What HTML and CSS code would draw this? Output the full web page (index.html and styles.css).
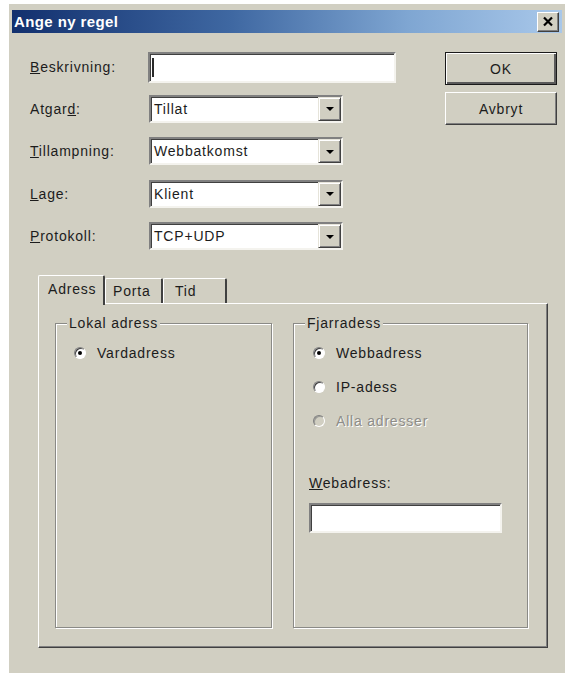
FILE: index.html
```html
<!DOCTYPE html>
<html lang="sv">
<head>
<meta charset="utf-8">
<title>Ange ny regel</title>
<link rel="stylesheet" href="styles.css">
</head>
<body>
<div class="dialog">
  <div class="titlebar">
    <span class="title">Ange ny regel</span>
    <span class="close">
      <svg width="12" height="11" viewBox="0 0 12 11"><path d="M2 1.5 L10 9.5 M10 1.5 L2 9.5" stroke="#000" stroke-width="2.2"/></svg>
    </span>
  </div>

  <div class="top">
    <div class="form">
      <label class="lbl tall"><u>B</u>eskrivning:</label>
      <div class="textbox wide"><span class="caret"></span></div>

      <label class="lbl">Atgar<u>d</u>:</label>
      <div class="combo"><span class="val">Tillat</span><span class="drop"><span class="arrow"></span></span></div>

      <label class="lbl"><u>T</u>illampning:</label>
      <div class="combo"><span class="val">Webbatkomst</span><span class="drop"><span class="arrow"></span></span></div>

      <label class="lbl"><u>L</u>age:</label>
      <div class="combo"><span class="val">Klient</span><span class="drop"><span class="arrow"></span></span></div>

      <label class="lbl"><u>P</u>rotokoll:</label>
      <div class="combo"><span class="val">TCP+UDP</span><span class="drop"><span class="arrow"></span></span></div>
    </div>

    <div class="buttons">
      <div class="btn default"><span>OK</span></div>
      <div class="btn"><span>Avbryt</span></div>
    </div>
  </div>

  <div class="tabs">
    <div class="tabstrip">
      <div class="tab active t-adress">Adress</div>
      <div class="tab t-porta">Porta</div>
      <div class="tab t-tid">Tid</div>
    </div>
    <div class="panel">
      <div class="group local">
        <span class="legend">Lokal adress</span>
        <div class="radio-row"><span class="radio on"></span><span>Vardadress</span></div>
      </div>
      <div class="group remote">
        <span class="legend">Fjarradess</span>
        <div class="radio-row"><span class="radio on"></span><span>Webbadress</span></div>
        <div class="radio-row"><span class="radio"></span><span>IP-adess</span></div>
        <div class="radio-row disabled"><span class="radio"></span><span class="dis-text">Alla adresser</span></div>
        <label class="lbl field-lbl"><u>W</u>ebadress:</label>
        <div class="textbox url"></div>
      </div>
    </div>
  </div>
</div>
</body>
</html>
```

FILE: styles.css
```css
html, body {
  margin: 0;
  padding: 0;
  background: #ffffff;
  overflow: hidden;
}

body {
  font-family: "Liberation Sans", Arial, sans-serif;
  font-size: 14px;
  letter-spacing: 0.8px;
  color: #1c1c1c;
}

.dialog {
  box-sizing: border-box;
  width: 556px;
  height: 669px;
  margin: 4px 0 0 9px;
  padding: 6px 3px 0 3px;
  background: #d1cfc2;
}

/* caption bar */
.titlebar {
  height: 23px;
  display: flex;
  align-items: center;
  justify-content: space-between;
  padding: 0 3px 0 2px;
  background: linear-gradient(to right, #12306e 0%, #3f68a2 40%, #7fa6d2 72%, #a9c8ea 100%);
}

.title {
  color: #fff;
  font-weight: bold;
  font-size: 15px;
  letter-spacing: 0.4px;
}

.close {
  box-sizing: border-box;
  width: 22px;
  height: 20px;
  display: flex;
  align-items: center;
  justify-content: center;
  background: #d1cfc2;
  border: 1px solid;
  border-color: #fff #404040 #404040 #fff;
  box-shadow: inset -1px -1px 0 #808080;
}

/* upper fields */
.top {
  display: flex;
  justify-content: space-between;
  margin: 19px 5px 0 18px;
}

.form {
  display: grid;
  grid-template-columns: 118px auto;
  grid-auto-rows: 42.5px;
  align-items: start;
}

.lbl {
  line-height: 28px;
}

.lbl.tall {
  line-height: 31px;
}

.textbox {
  box-sizing: border-box;
  background: #fff;
  border: 2px solid;
  border-color: #808080 #f4f3ee #f4f3ee #808080;
  box-shadow: inset 1px 1px 0 #404040;
  position: relative;
}

.textbox.wide {
  width: 248px;
  height: 31px;
}

.caret {
  position: absolute;
  left: 2px;
  top: 4px;
  width: 2px;
  height: 19px;
  background: #2a2a2a;
}

.combo {
  box-sizing: border-box;
  width: 194px;
  height: 28px;
  margin-left: 1px;
  background: #fff;
  border: 2px solid;
  border-color: #808080 #f4f3ee #f4f3ee #808080;
  box-shadow: inset 1px 1px 0 #404040;
  display: flex;
  align-items: center;
  justify-content: space-between;
}

.combo .val {
  padding-left: 3px;
}

.drop {
  box-sizing: border-box;
  width: 23px;
  height: 24px;
  align-self: flex-end;
  background: #d1cfc2;
  border: 1px solid;
  border-color: #e6e4da #404040 #404040 #e6e4da;
  box-shadow: inset 1px 1px 0 #fff, inset -1px -1px 0 #808080;
  display: flex;
  align-items: center;
  justify-content: center;
}

.arrow {
  width: 0;
  height: 0;
  border-left: 4px solid transparent;
  border-right: 4px solid transparent;
  border-top: 4px solid #000;
  margin-top: 1px;
}

/* command buttons */
.buttons {
  display: flex;
  flex-direction: column;
  gap: 7px;
}

.btn {
  box-sizing: border-box;
  width: 112px;
  height: 33px;
  display: flex;
  align-items: center;
  justify-content: center;
  background: #d1cfc2;
  border: 1px solid;
  border-color: #fff #404040 #404040 #fff;
  box-shadow: inset -1px -1px 0 #808080;
}

.btn.default {
  border: 1px solid #1a1a1a;
  box-shadow: inset 1px 1px 0 #fff, inset -2px -2px 0 #5a5a5a;
}

/* tab control */
.tabs {
  margin: 10px 0 0 26px;
}

.tabstrip {
  display: flex;
  align-items: flex-end;
  height: 28px;
}

.tab {
  box-sizing: border-box;
  height: 25px;
  padding-left: 8px;
  line-height: 24px;
  background: #d1cfc2;
  border-top: 1px solid #fff;
  border-left: 1px solid #fff;
  border-right: 2px solid #404040;
  border-radius: 2px 2px 0 0;
}

.tab.active {
  height: 30px;
  margin-bottom: -2px;
  position: relative;
  z-index: 1;
  line-height: 27px;
  padding-left: 9px;
}

.t-adress { width: 67px; }
.t-porta { width: 58px; padding-left: 7px; }
.t-tid { width: 64px; padding-left: 11px; }

.panel {
  box-sizing: border-box;
  width: 510px;
  height: 345px;
  display: flex;
  gap: 21px;
  padding: 19px 18px 20px 16px;
  border-top: 1px solid #fff;
  border-left: 1px solid #fff;
  border-right: 1px solid #404040;
  border-bottom: 1px solid #404040;
  box-shadow: inset -1px -1px 0 #808080;
}

/* group boxes */
.group {
  box-sizing: border-box;
  height: 305px;
  position: relative;
  border: 1px solid #8a8a86;
  box-shadow: inset 1px 1px 0 #fff, 1px 1px 0 #fff;
  padding: 12px 0 0 15px;
  display: flex;
  flex-direction: column;
}

.group.local {
  width: 217px;
  padding-left: 14px;
}

.group.remote {
  width: 235px;
}

.legend {
  position: absolute;
  top: -9px;
  left: 11px;
  padding: 0 2px;
  background: #d1cfc2;
  line-height: 16px;
}

.radio-row {
  display: flex;
  align-items: center;
  gap: 11px;
  height: 34px;
  margin-left: 4px;
}

.radio {
  box-sizing: border-box;
  width: 12px;
  height: 12px;
  border-radius: 50%;
  background: #fff;
  border: 1px solid;
  border-color: #808080 #fff #fff #808080;
  box-shadow: inset 1px 1px 0 #404040;
  display: flex;
  align-items: center;
  justify-content: center;
}

.radio.on::after {
  content: "";
  width: 4px;
  height: 4px;
  border-radius: 50%;
  background: #000;
}

.radio-row.disabled .radio {
  background: #d1cfc2;
  box-shadow: inset 1px 1px 0 #9a9a96;
}

.dis-text {
  color: #8e8d88;
  text-shadow: 1px 1px 0 #fff;
}

.field-lbl {
  margin-top: 37px;
  line-height: 16px;
}

.textbox.url {
  width: 193px;
  height: 30px;
  margin-top: 12px;
}
```
